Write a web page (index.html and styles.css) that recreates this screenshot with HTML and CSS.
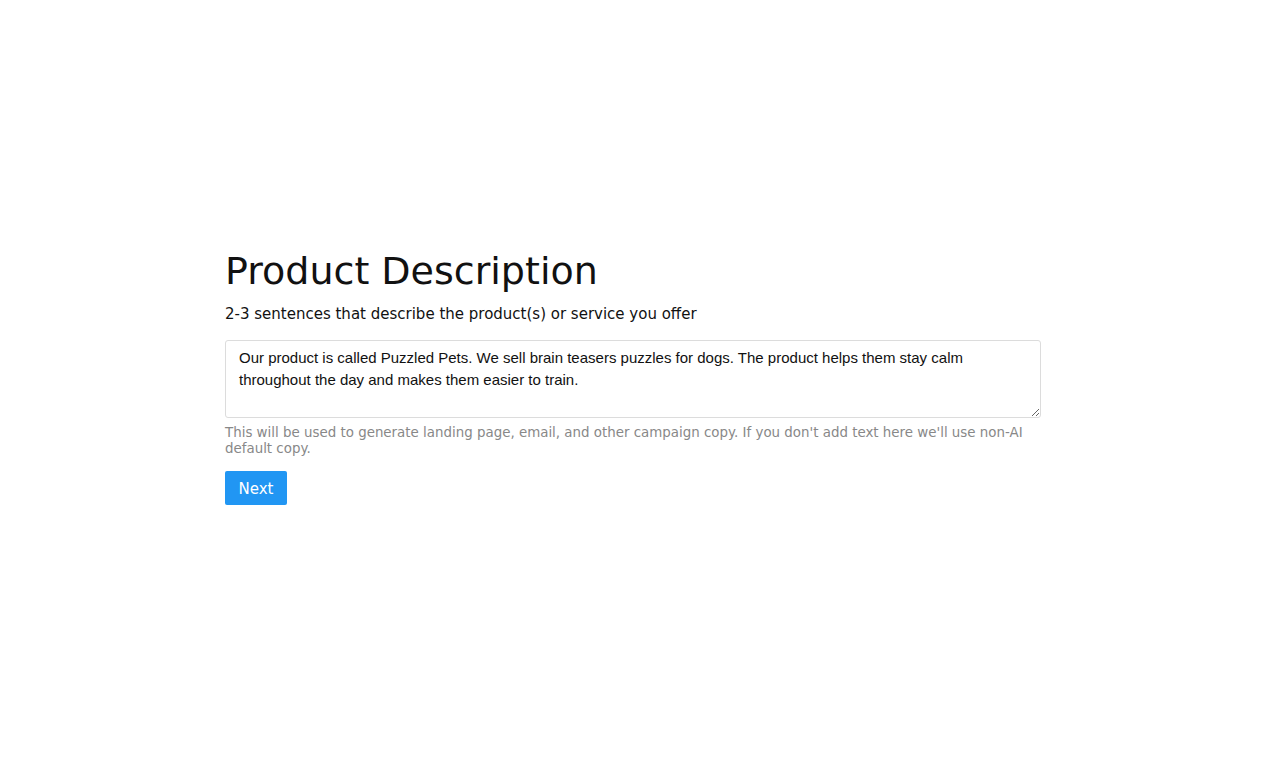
FILE: index.html
```html
<!DOCTYPE html>
<html>
<head>
<meta charset="utf-8">
<link rel="stylesheet" href="styles.css">
</head>
<body>
<main class="page">
  <section class="form">
    <h1 class="title">Product Description</h1>
    <p class="subtitle">2-3 sentences that describe the product(s) or service you offer</p>
    <textarea class="field">Our product is called Puzzled Pets. We sell brain teasers puzzles for dogs. The product helps them stay calm throughout the day and makes them easier to train.</textarea>
    <p class="help">This will be used to generate landing page, email, and other campaign copy. If you don't add text here we'll use non-AI default copy.</p>
    <button class="next">Next</button>
  </section>
</main>
</body>
</html>
```
FILE: styles.css
```css
html, body {
  margin: 0;
  padding: 0;
  background: #fff;
}
body {
  font-family: "DejaVu Sans", Verdana, sans-serif;
  color: #111;
}
.page {
  width: 1270px;
  height: 760px;
  display: flex;
  justify-content: flex-start;
}
.form {
  margin-left: 225px;
  margin-top: 246px;
  width: 816px;
  display: flex;
  flex-direction: column;
  align-items: flex-start;
}
.title {
  margin: 0;
  font-size: 38px;
  font-weight: normal;
  line-height: 50px;
}
.subtitle {
  margin: 7px 0 0;
  font-size: 15px;
  line-height: 22px;
}
.field {
  margin-top: 15px;
  box-sizing: border-box;
  width: 816px;
  height: 78px;
  border: 1px solid #dcdcdc;
  border-radius: 3px;
  padding: 6px 13px;
  font-family: "Liberation Sans", Arial, sans-serif;
  font-size: 15px;
  line-height: 22px;
  color: #111;
  resize: vertical;
  outline: none;
}
.help {
  margin: 7px 0 0;
  font-size: 13.4px;
  line-height: 16px;
  color: #888;
}
.next {
  margin-top: 14px;
  width: 62px;
  height: 34px;
  border: none;
  border-radius: 2px;
  background: #2196f3;
  color: #fff;
  font-family: "DejaVu Sans", Verdana, sans-serif;
  font-size: 15px;
  line-height: 36px;
  padding: 0;
}
```
